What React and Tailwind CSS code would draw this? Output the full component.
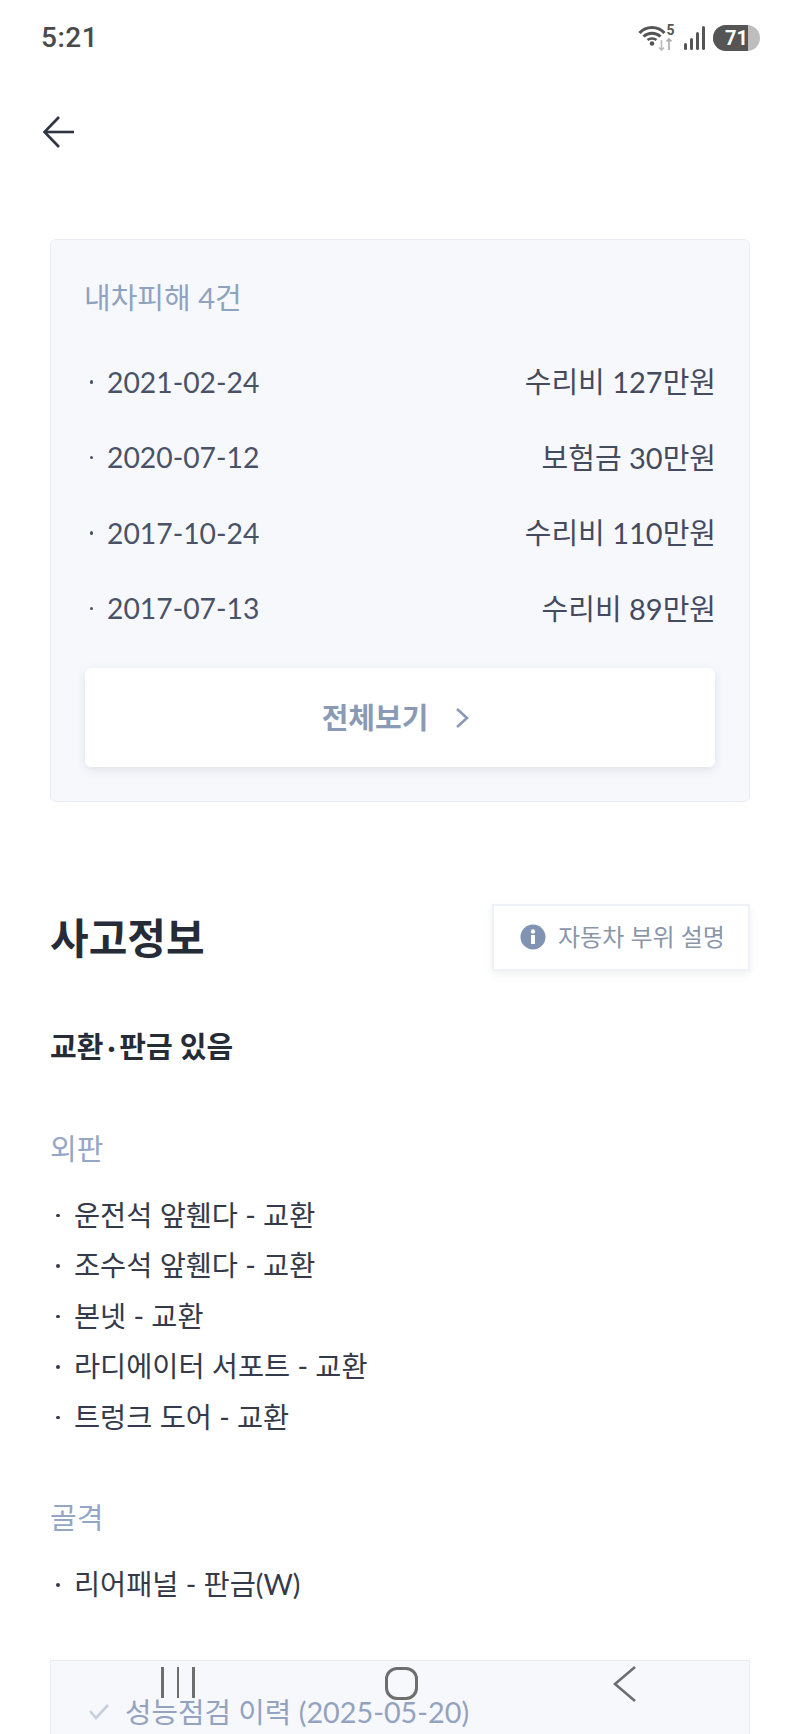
import React from "react";

const damages = [
  { date: "2021-02-24", text: "수리비 127만원" },
  { date: "2020-07-12", text: "보험금 30만원" },
  { date: "2017-10-24", text: "수리비 110만원" },
  { date: "2017-07-13", text: "수리비 89만원" },
];

const outer = [
  "운전석 앞휀다 - 교환",
  "조수석 앞휀다 - 교환",
  "본넷 - 교환",
  "라디에이터 서포트 - 교환",
  "트렁크 도어 - 교환",
];

const font = "font-['Lato','Noto_Sans_CJK_KR',sans-serif]";

function StatusBar() {
  return (
    <div className="h-[74px] flex items-center justify-between pl-[41px] pr-[40px] pt-[1px]">
      <span className="font-['Roboto',sans-serif] text-[28px] font-medium text-[#4a4a4d] tracking-[0.5px]">5:21</span>
      <div className="flex items-center">
        <svg width="43" height="30" viewBox="0 0 43 30" fill="none">
          <path d="M1.5 10 C 8 2.5, 20 2.5, 26.5 10" stroke="#555" strokeWidth="3" />
          <path d="M5.5 13.5 C 10.5 9, 17.5 9, 22.5 13.5" stroke="#555" strokeWidth="3" />
          <path d="M9.5 17 C 12 15, 16 15, 18.5 17" stroke="#555" strokeWidth="2.6" />
          <circle cx="14" cy="20.5" r="2.3" fill="#555" />
          <path d="M23.5 17 V27 M21 24.5 L23.5 27 L26 24.5" stroke="#bbb" strokeWidth="1.6" />
          <path d="M31 27 V16 M28.5 18.5 L31 16 L33.5 18.5" stroke="#aaa" strokeWidth="1.6" />
          <text x="28.5" y="12" fontSize="14" fontWeight="700" fill="#555" fontFamily="Roboto, sans-serif">5</text>
        </svg>
        <svg className="ml-[2px]" width="24" height="26" viewBox="0 0 24 26" fill="#555">
          <rect x="1" y="18" width="3" height="7" rx="1.5" />
          <rect x="7" y="13" width="3" height="12" rx="1.5" />
          <rect x="13" y="7" width="3" height="18" rx="1.5" />
          <rect x="19" y="1" width="3" height="24" rx="1.5" />
        </svg>
        <div className="ml-[6px] w-[47px] h-[26px] rounded-full bg-[#bdbdbd] overflow-hidden">
          <div className="w-[35px] h-full bg-[#555555] flex items-center justify-end font-['Roboto',sans-serif] text-[20px] font-bold text-white leading-none">
            71
          </div>
        </div>
      </div>
    </div>
  );
}

function Bullet() {
  return <span className="block w-[3.5px] h-[3.5px] rounded-full bg-current" />;
}

function DamageRow({ date, text }) {
  return (
    <div className="h-[75.5px] flex items-center justify-between text-[#4a5268]">
      <div className="flex items-center">
        <span className="ml-[4.5px] mr-[14px] flex"><Bullet /></span>
        <span className="text-[28.3px]">{date}</span>
      </div>
      <span className="mr-[-1px] text-[29px] text-[#444b5e]">{text}</span>
    </div>
  );
}

function PartRow({ children }) {
  return (
    <div className="h-[50.5px] flex items-center text-[28.4px] text-[#353a4a]">
      <span className="ml-[6px] mr-[14.5px] flex"><Bullet /></span>
      <span>{children}</span>
    </div>
  );
}

export default function App() {
  return (
    <div className={`relative w-[800px] h-[1734px] overflow-hidden bg-white ${font}`}>
      <StatusBar />

      <div className="h-[116px] pl-[42px] pt-[41px]">
        <svg width="34" height="34" viewBox="0 0 34 34" fill="none" stroke="#2f3342" strokeWidth="2.6">
          <path d="M32 17 H3" />
          <path d="M17 2 L2.5 17 L17 32" />
        </svg>
      </div>

      <div className="mx-[50px] mt-[49px]">
        <div className="h-[563px] border border-[#e9edf3] rounded-[6px] bg-[#f6f8fc] pl-[33px] pr-[34px] pt-[36px]">
          <div className="text-[29px] text-[#8fa3c0] leading-[44px] h-[60px]">내차피해 4건</div>
          <div className="mt-[8px] pl-[1px]">
            {damages.map((d) => (
              <DamageRow key={d.date} date={d.date} text={d.text} />
            ))}
          </div>
          <div className="mt-[22px] ml-[1px] h-[99px] bg-white rounded-[6px] shadow-[0_3px_10px_rgba(120,130,150,0.18)] flex items-center justify-center pr-[8px] text-[#8a9ab5]">
            <span className="text-[29px] font-bold">전체보기</span>
            <svg className="ml-[26px]" width="16" height="24" viewBox="0 0 16 24" fill="none" stroke="#8a9ab5" strokeWidth="2.6">
              <path d="M3 3 L13 12 L3 21" />
            </svg>
          </div>
        </div>

        <div className="mt-[102px] flex items-center justify-between h-[66px]">
          <h1 className="mt-[2px] text-[42px] font-bold text-[#262b38]">사고정보</h1>
          <div className="w-[258px] h-[67px] border-2 border-[#eef1f6] bg-white shadow-[0_3px_8px_rgba(120,130,150,0.12)] flex items-center pl-[26px]">
            <svg width="26" height="26" viewBox="0 0 26 26">
              <circle cx="13" cy="13" r="12.5" fill="#8193b2" />
              <rect x="11" y="11" width="4" height="9" fill="#fff" />
              <circle cx="13" cy="7.5" r="2.2" fill="#fff" />
            </svg>
            <span className="ml-[12px] text-[24px] text-[#8b96ab]">자동차 부위 설명</span>
          </div>
        </div>

        <div className="mt-[55px] text-[29px] font-bold text-[#262b38] leading-[44px]">교환<span className="mx-[4px]">·</span>판금 있음</div>

        <div className="mt-[58px] text-[29px] text-[#93a6c6] leading-[44px]">외판</div>
        <div className="mt-[19px]">
          {outer.map((p) => (
            <PartRow key={p}>{p}</PartRow>
          ))}
        </div>

        <div className="mt-[53px] text-[29px] text-[#93a6c6] leading-[44px]">골격</div>
        <div className="mt-[20px]">
          <PartRow>리어패널 - 판금(W)</PartRow>
        </div>

        <div className="mt-[50px] h-[120px] border border-[#e9edf3] bg-[#f6f8fc] flex items-start pl-[37px] pt-[30px]">
          <svg className="mt-[12px]" width="22" height="18" viewBox="0 0 22 18" fill="none" stroke="#c5cfdd" strokeWidth="2.6">
            <path d="M2 8 L8 15 L20 2" />
          </svg>
          <span className="ml-[15px] text-[28.8px] text-[#93a3bf]">성능점검 이력 (2025-05-20)</span>
        </div>
      </div>

      <div className="absolute left-0 right-0 top-[1667px] h-[36px]">
        <div className="absolute left-[161px] top-0 flex gap-[13px]">
          <span className="block w-[2.5px] h-[31px] bg-[#6e6e6e]" />
          <span className="block w-[2.5px] h-[31px] bg-[#6e6e6e]" />
          <span className="block w-[2.5px] h-[31px] bg-[#6e6e6e]" />
        </div>
        <div className="absolute left-[385px] top-0 w-[33px] h-[33px] border-[3px] border-[#6e6e6e] rounded-[12px]" />
        <svg className="absolute left-[612px] top-[-1px]" width="26" height="36" viewBox="0 0 26 36" fill="none" stroke="#6e6e6e" strokeWidth="2.6">
          <path d="M23 1 L3 18 L23 35" />
        </svg>
      </div>
    </div>
  );
}
